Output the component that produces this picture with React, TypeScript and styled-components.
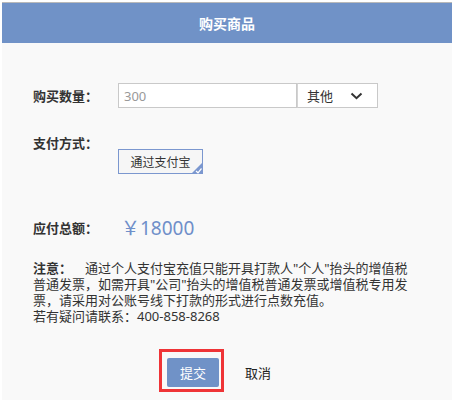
import React, { useState } from "react";
import styled, { createGlobalStyle } from "styled-components";

const GlobalStyle = createGlobalStyle`
  html, body {
    margin: 0;
    padding: 0;
    background: #ffffff;
  }
  body {
    font-family: "Noto Sans", "Noto Sans CJK SC", sans-serif;
    color: #333333;
  }
`;

const Panel = styled.div`
  margin: 2px 0 0 2px;
  width: 450px;
  height: 398px;
  border-top: 1px solid #b9b9b9;
  background: #f9f9f9;
  box-sizing: border-box;
  display: flex;
  flex-direction: column;
`;

const Header = styled.div`
  height: 40px;
  line-height: 40px;
  background: #7092c7;
  color: #ffffff;
  text-align: center;
  font-size: 14px;
  font-weight: 700;
  font-family: "Noto Sans CJK SC", sans-serif;
`;

const Body = styled.div`
  padding: 40px 0 0 31px;
  display: flex;
  flex-direction: column;
`;

const Row = styled.div<{ $top?: number; $align?: string }>`
  display: flex;
  align-items: ${({ $align }) => $align || "center"};
  margin-top: ${({ $top }) => $top || 0}px;
`;

const Label = styled.div`
  width: 85px;
  flex: none;
  font-size: 13px;
  line-height: 20px;
  font-weight: 700;
  color: #333333;
  font-family: "Noto Sans CJK SC", sans-serif;
`;

const QtyInput = styled.input`
  width: 179px;
  height: 25px;
  box-sizing: border-box;
  border: 1px solid #c9c9c9;
  background: #ffffff;
  padding: 0 5px;
  font-size: 13px;
  color: #999999;
  font-family: "Noto Sans", sans-serif;
  outline: none;
`;

const Select = styled.div`
  width: 81px;
  height: 25px;
  box-sizing: border-box;
  border: 1px solid #c9c9c9;
  border-left: 1px solid #d4d4d4;
  background: #ffffff;
  display: flex;
  align-items: center;
  padding-left: 9px;
  gap: 17px;
  font-size: 13px;
  color: #333333;
  font-family: "Noto Sans CJK SC", sans-serif;
`;

const Options = styled.div`
  padding-top: 16px;
`;

const PayOption = styled.button<{ $active?: boolean }>`
  position: relative;
  width: 85px;
  height: 25px;
  box-sizing: border-box;
  border: 1px solid ${({ $active }) => ($active ? "#7b97cf" : "#c9c9c9")};
  background: #f6f6f6;
  font-size: 12px;
  color: #333333;
  font-family: "Noto Sans CJK SC", sans-serif;
  padding: 0;
  cursor: pointer;
`;

const CornerMark = styled.svg`
  position: absolute;
  right: -1px;
  bottom: -1px;
`;

const Price = styled.div`
  margin-left: 3px;
  font-size: 19px;
  line-height: 30px;
  color: #6f8fc9;
  font-family: "Noto Sans", "Noto Sans CJK SC", sans-serif;
`;

const Note = styled.p`
  margin: 17px 0 0;
  width: 382px;
  font-size: 13px;
  line-height: 16px;
  color: #333333;
  font-family: "Noto Sans", "Noto Sans CJK SC", sans-serif;
  b {
    font-weight: 700;
    font-family: "Noto Sans CJK SC", sans-serif;
    margin-right: 13px;
  }
`;

const Actions = styled.div`
  margin: 34px 0 0 -31px;
  padding-right: 3px;
  display: flex;
  justify-content: center;
  gap: 13px;
`;

const Highlight = styled.div`
  position: relative;
  &::after {
    content: "";
    position: absolute;
    top: -9px;
    left: -8px;
    right: -5px;
    bottom: -5px;
    border: 3px solid #ef3437;
    pointer-events: none;
  }
`;

const Btn = styled.button<{ $primary?: boolean }>`
  width: 52px;
  height: 29px;
  border: none;
  border-radius: 2px;
  background: ${({ $primary }) => ($primary ? "#7092c7" : "transparent")};
  color: ${({ $primary }) => ($primary ? "#ffffff" : "#222222")};
  font-size: 13px;
  font-family: "Noto Sans CJK SC", sans-serif;
  padding: 0;
  cursor: pointer;
`;

const App = () => {
  const [qty, setQty] = useState("300");

  return (
    <>
      <GlobalStyle />
      <Panel>
        <Header>购买商品</Header>
        <Body>
          <Row>
            <Label>购买数量：</Label>
            <QtyInput value={qty} onChange={(e) => setQty(e.target.value)} />
            <Select>
              其他
              <svg width="13" height="8" viewBox="0 0 13 8">
                <polyline
                  points="1.5,1.5 6.5,6.2 11.5,1.5"
                  fill="none"
                  stroke="#333"
                  strokeWidth="2"
                />
              </svg>
            </Select>
          </Row>

          <Row $top={25} $align="flex-start">
            <Label>支付方式：</Label>
            <Options>
              <PayOption $active>
                通过支付宝
                <CornerMark width="12" height="12" viewBox="0 0 12 12">
                  <polygon points="12,0 12,12 0,12" fill="#7b97cf" />
                  <polyline
                    points="5,9 7,10.8 10.5,6.5"
                    fill="none"
                    stroke="#fff"
                    strokeWidth="1.2"
                  />
                </CornerMark>
              </PayOption>
            </Options>
          </Row>

          <Row $top={39}>
            <Label>应付总额：</Label>
            <Price>￥18000</Price>
          </Row>

          <Note>
            <b>注意：</b>通过个人支付宝充值只能开具打款人"个人"抬头的增值税普通发票，如需开具"公司"抬头的增值税普通发票或增值税专用发票，请采用对公账号线下打款的形式进行点数充值。
            <br />
            若有疑问请联系：400-858-8268
          </Note>

          <Actions>
            <Highlight>
              <Btn $primary>提交</Btn>
            </Highlight>
            <Btn>取消</Btn>
          </Actions>
        </Body>
      </Panel>
    </>
  );
};

export default App;
